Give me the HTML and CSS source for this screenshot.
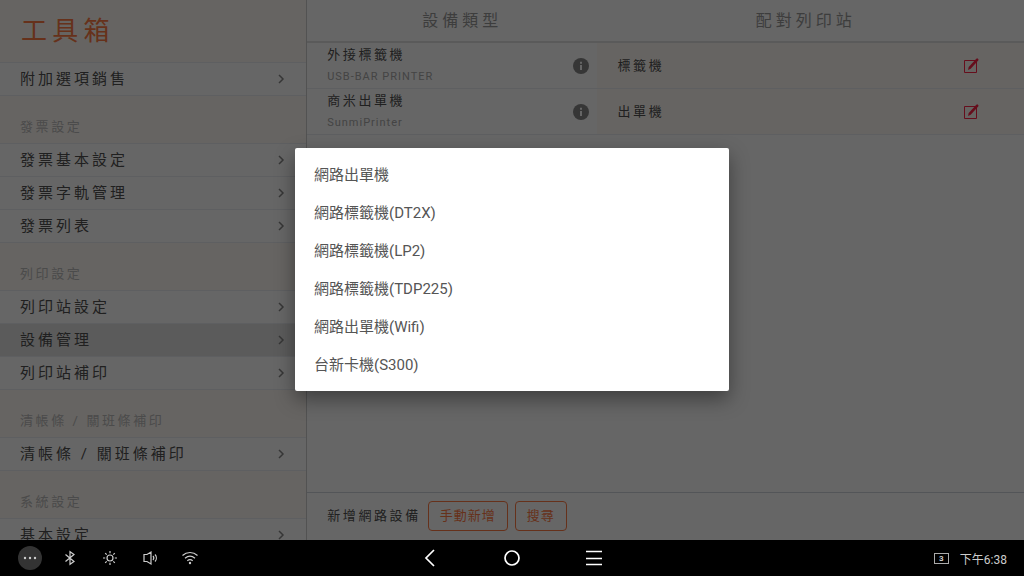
FILE: index.html
```
<!DOCTYPE html>
<html lang="zh-Hant">
<head>
  <meta charset="UTF-8" />
  <meta name="viewport" content="width=device-width, initial-scale=1" />
  <title>工具箱</title>
  <link rel="stylesheet" href="styles.css">
</head>
<body>

  <svg class="defs">
    <symbol id="chevron" viewBox="0 0 8 12"><path d="M2 2l4 4-4 4" /></symbol>
    <symbol id="info" viewBox="0 0 16 16">
      <circle cx="8" cy="8" r="8" />
      <path class="mark" d="M7 3.800h2v2H7zM7 7h2v5H7z" />
    </symbol>
    <symbol id="edit" viewBox="0 0 16 16">
      <path class="frame" d="M1.500 2.500h12v12h-12z" />
      <path class="pen" d="M5 12L5.700 9 13.300.8 14.300.2l1.200 1-.3 1.200L7.700 10.800z" />
    </symbol>
  </svg>

  <div class="app">
    <div class="main">
      <nav class="sidebar">
        <h1>工具箱</h1>
        <a class="item" href="#">附加選項銷售<svg><use href="#chevron" /></svg></a>

        <h2>發票設定</h2>
        <a class="item" href="#">發票基本設定<svg><use href="#chevron" /></svg></a>
        <a class="item" href="#">發票字軌管理<svg><use href="#chevron" /></svg></a>
        <a class="item" href="#">發票列表<svg><use href="#chevron" /></svg></a>

        <h2>列印設定</h2>
        <a class="item" href="#">列印站設定<svg><use href="#chevron" /></svg></a>
        <a class="item active" href="#">設備管理<svg><use href="#chevron" /></svg></a>
        <a class="item" href="#">列印站補印<svg><use href="#chevron" /></svg></a>

        <h2>清帳條 / 關班條補印</h2>
        <a class="item" href="#">清帳條 / 關班條補印<svg><use href="#chevron" /></svg></a>

        <h2>系統設定</h2>
        <a class="item" href="#">基本設定<svg><use href="#chevron" /></svg></a>
      </nav>

      <section class="content">
        <table class="devices">
          <thead>
            <tr>
              <th class="col-device">設備類型</th>
              <th class="col-station">配對列印站</th>
            </tr>
          </thead>
          <tbody>
            <tr>
              <td>
                <div class="cell">
                  <div class="device">
                    <div class="name">外接標籤機</div>
                    <div class="model">USB-BAR PRINTER</div>
                  </div>
                  <button class="icon-btn info" aria-label="資訊"><svg><use href="#info" /></svg></button>
                </div>
              </td>
              <td class="station">
                <div class="cell">
                  <div class="name">標籤機</div>
                  <button class="icon-btn edit" aria-label="編輯"><svg><use href="#edit" /></svg></button>
                </div>
              </td>
            </tr>
            <tr>
              <td>
                <div class="cell">
                  <div class="device">
                    <div class="name">商米出單機</div>
                    <div class="model">SunmiPrinter</div>
                  </div>
                  <button class="icon-btn info" aria-label="資訊"><svg><use href="#info" /></svg></button>
                </div>
              </td>
              <td class="station">
                <div class="cell">
                  <div class="name">出單機</div>
                  <button class="icon-btn edit" aria-label="編輯"><svg><use href="#edit" /></svg></button>
                </div>
              </td>
            </tr>
          </tbody>
        </table>

        <div class="add-bar">
          <span class="name">新增網路設備</span>
          <button class="outline">手動新增</button>
          <button class="outline">搜尋</button>
        </div>
      </section>

      <div class="overlay">
        <div class="dialog" role="dialog" aria-label="新增網路設備">
          <button>網路出單機</button>
          <button>網路標籤機(DT2X)</button>
          <button>網路標籤機(LP2)</button>
          <button>網路標籤機(TDP225)</button>
          <button>網路出單機(Wifi)</button>
          <button>台新卡機(S300)</button>
        </div>
      </div>
    </div>

    <footer class="navbar">
      <div class="quick">
        <button class="more" aria-label="更多">
          <svg viewBox="0 0 24 24"><circle cx="7" cy="12" r="1.200" /><circle cx="12" cy="12" r="1.200" /><circle cx="17" cy="12" r="1.200" /></svg>
        </button>
        <button aria-label="藍牙">
          <svg viewBox="0 0 24 24"><path d="M7.500 8.500l8.500 7-4 2.800V5.700L16 8.500l-8.500 7" /></svg>
        </button>
        <button aria-label="亮度">
          <svg viewBox="0 0 24 24"><circle cx="12" cy="12" r="3" /><path d="M12 5v2.200M12 16.800V19M5 12h2.200M16.800 12H19M7.200 7.200l1.500 1.500M15.300 15.300l1.500 1.500M16.800 7.200l-1.500 1.500M8.700 15.300l-1.500 1.500" /></svg>
        </button>
        <button aria-label="音量">
          <svg viewBox="0 0 24 24"><path d="M6 8.500h3L13 6v12l-4-2.500H6zM15 10c1 1.200 1 2.800 0 4M17 8.500c1.800 2 1.800 5 0 7" /></svg>
        </button>
        <button aria-label="Wi-Fi">
          <svg viewBox="0 0 24 24"><path d="M4.500 9.500c4.300-4 10.700-4 15 0M7 12.300c3-2.600 7-2.600 10 0M9.300 14.700c1.700-1.300 3.700-1.300 5.400 0" /><circle class="dot" cx="12" cy="17" r="1.200" /></svg>
        </button>
      </div>
      <div class="keys">
        <button aria-label="返回"><svg viewBox="0 0 24 24"><path d="M16 4l-8 8 8 8" /></svg></button>
        <button aria-label="主畫面"><svg viewBox="0 0 24 24"><circle cx="12" cy="12" r="7" /></svg></button>
        <button aria-label="選單"><svg viewBox="0 0 24 24"><path d="M4 5.500h16M4 12.500h16M4 18.500h16" /></svg></button>
      </div>
      <div class="status">
        <span class="count">3</span>
        <span>下午6:38</span>
      </div>
    </footer>
  </div>

</body>
</html>
```
FILE: styles.css
```
* { box-sizing: border-box; }
body { margin: 0; font-family: Roboto, "Noto Sans CJK TC", sans-serif; color: #555; }
button { padding: 0; border: 0; background: none; font: inherit; color: inherit; cursor: pointer; }
svg { display: block; }
.defs { position: absolute; width: 0; height: 0; }

.app { display: flex; flex-direction: column; height: 100vh; }
.main { position: relative; display: flex; flex: 1; min-height: 0; overflow: hidden; background: #fff; }

/* sidebar */
.sidebar { width: 30%; overflow: hidden; border-right: 1px solid #ccc; background: #fffaf4; }
.sidebar h1 { margin: 0; padding-left: 21px; font-size: 26px; font-weight: 400; line-height: 62px; letter-spacing: 0.2em; color: #ff7a45; }
.sidebar h2 { height: 48px; margin: 0; padding: 21px 0 0 20px; font-size: 13px; font-weight: 400; line-height: 20px; letter-spacing: 0.2em; color: #bbb; }
.item { display: flex; align-items: center; justify-content: space-between; height: 33px; padding: 0 21px 3px 20px; border-top: 1px solid #eceef2; background: #fff; font-size: 15px; letter-spacing: 0.2em; color: #505050; text-decoration: none; }
.item + h2 { border-top: 1px solid #eceef2; }
.item.active { background: #e4e4e4; }
.item svg { width: 8px; height: 12px; margin-top: 2px; fill: none; stroke: #888; stroke-width: 1.500; }

/* device list */
.content { display: flex; flex: 1; flex-direction: column; justify-content: space-between; }
.devices { width: 100%; border-collapse: collapse; table-layout: fixed; }
.devices th { height: 42px; padding: 0 0 3px; border-bottom: 2px solid #e2e2e2; font-size: 16px; font-weight: 400; letter-spacing: 4px; color: #999; }
.devices .col-device { width: 40.5%; padding-left: 20px; }
.devices .col-station { padding-right: 10px; }
.devices td { height: 46px; padding: 0; border-bottom: 1px solid #eceef2; }
.devices .station { background: #fffaf4; }
.cell { display: flex; align-items: center; justify-content: space-between; padding: 0 8px 0 20px; }
.station .cell { padding-right: 45px; }
.name { font-size: 13px; line-height: 23px; letter-spacing: 0.2em; color: #505050; }
.model { font-size: 11px; line-height: 22px; letter-spacing: 1px; color: #aaa; }
.icon-btn svg { width: 16px; height: 16px; }
.info { fill: #888; }
.mark { fill: #fff; }
.edit { color: #ff2348; }
.frame { fill: none; stroke: currentColor; stroke-width: 1; }
.pen { fill: currentColor; }

.add-bar { display: flex; align-items: center; gap: 7px; height: 48px; padding: 0 0 2px 20px; border-top: 1px solid #d0d4dc; }
.outline { height: 30px; padding: 0 11px 2px; border: 1px solid #ff7a45; border-radius: 4px; font-size: 13px; letter-spacing: 1px; color: #ff7a45; }

/* dialog */
.overlay { position: absolute; inset: 0; display: flex; align-items: center; justify-content: center; padding-bottom: 1px; background: rgba(0, 0, 0, 0.6); }
.dialog { display: flex; flex-direction: column; width: 90%; max-width: 434px; padding: 6px 0 9px; border-radius: 2px; background: #fff; box-shadow: 0 8px 20px rgba(0, 0, 0, 0.4); }
.dialog button { height: 38px; padding: 0 19px; font-size: 15px; text-align: left; }

/* system bar */
.navbar { display: grid; grid-template-columns: 1fr auto 1fr; align-items: center; height: 36px; background: #000; color: #ccc; }
.navbar svg { width: 24px; height: 24px; fill: none; stroke: currentColor; stroke-width: 1.200; }
.quick { display: flex; gap: 16px; padding-left: 18px; }
.more { border-radius: 50%; background: #333; }
.navbar .more circle, .dot { fill: currentColor; stroke: none; }
.keys { display: flex; gap: 58px; color: #fff; }
.navbar .keys svg { stroke-width: 1.700; }
.status { display: flex; align-items: center; justify-content: flex-end; gap: 11px; padding-right: 17px; font-size: 12px; }
.count { width: 15px; border: 1px solid #aaa; font-size: 8px; font-weight: 700; line-height: 9px; text-align: center; }
```
